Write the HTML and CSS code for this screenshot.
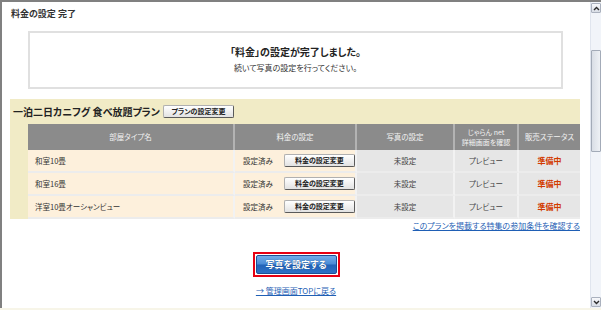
FILE: index.html
```html
<!DOCTYPE html>
<html lang="ja">
<head>
<meta charset="utf-8">
<title>料金の設定 完了</title>
<link rel="stylesheet" href="styles.css">
</head>
<body>
<div class="window">
  <div class="frame">
    <main class="content">
      <h1 class="page-title">料金の設定 完了</h1>
      <div class="notice">
        <p class="notice-main">「料金」の設定が完了しました。</p>
        <p class="notice-sub">続いて写真の設定を行ってください。</p>
      </div>
      <section class="plan">
        <div class="plan-head">
          <h2 class="plan-name">一泊二日カニフグ 食べ放題プラン</h2>
          <button class="btn-gray btn-plan" type="button">プランの設定変更</button>
        </div>
        <div class="rooms">
          <div class="row head">
            <div class="cell">部屋タイプ名</div>
            <div class="cell">料金の設定</div>
            <div class="cell">写真の設定</div>
            <div class="cell two">じゃらん net<br>詳細画面を確認</div>
            <div class="cell">販売ステータス</div>
          </div>
          <div class="row body">
            <div class="cell name">和室10畳</div>
            <div class="cell price"><span>設定済み</span><button class="btn-gray btn-price" type="button">料金の設定変更</button></div>
            <div class="cell gray">未設定</div>
            <div class="cell gray">プレビュー</div>
            <div class="cell gray status">準備中</div>
          </div>
          <div class="row body">
            <div class="cell name">和室16畳</div>
            <div class="cell price"><span>設定済み</span><button class="btn-gray btn-price" type="button">料金の設定変更</button></div>
            <div class="cell gray">未設定</div>
            <div class="cell gray">プレビュー</div>
            <div class="cell gray status">準備中</div>
          </div>
          <div class="row body">
            <div class="cell name">洋室10畳オーシャンビュー</div>
            <div class="cell price"><span>設定済み</span><button class="btn-gray btn-price" type="button">料金の設定変更</button></div>
            <div class="cell gray">未設定</div>
            <div class="cell gray">プレビュー</div>
            <div class="cell gray status">準備中</div>
          </div>
        </div>
      </section>
      <p class="criteria"><a href="#">このプランを掲載する特集の参加条件を確認する</a></p>
      <div class="actions">
        <div class="focus-ring"><button class="btn-blue" type="button">写真を設定する</button></div>
      </div>
      <p class="back"><a href="#">→ 管理画面TOPに戻る</a></p>
    </main>
    <div class="scrollbar">
      <div class="sb-btn">
        <svg width="7" height="5" viewBox="0 0 7 5"><polyline points="1,4 3.5,1.5 6,4" fill="none" stroke="#2b2b2b" stroke-width="1.4"/></svg>
      </div>
      <div class="sb-track top"></div>
      <div class="sb-thumb"></div>
      <div class="sb-track rest"></div>
      <div class="sb-btn">
        <svg width="7" height="5" viewBox="0 0 7 5"><polyline points="1,1 3.5,3.5 6,1" fill="none" stroke="#2b2b2b" stroke-width="1.4"/></svg>
      </div>
    </div>
  </div>
  <div class="bottom-strip"></div>
</div>
</body>
</html>
```

FILE: styles.css
```css
* { box-sizing: border-box; margin: 0; padding: 0; }
html, body { width: 601px; height: 310px; overflow: hidden; background: #fff; }
body {
  font-family: "Noto Sans CJK JP", "Noto Sans", sans-serif;
  color: #333;
  font-feature-settings: "palt";
}
a { color: #1f5fb5; text-decoration: underline; }

.window { display: flex; flex-direction: column; height: 310px; }
.frame {
  display: flex;
  height: 308px;
  border-top: 2px solid #808080;
  border-left: 2px solid #808080;
}
.content {
  flex: 1;
  min-width: 0;
  overflow: hidden;
  display: flex;
  flex-direction: column;
}
.bottom-strip { height: 2px; background: #f7f5e8; }

.page-title {
  font-size: 9px;
  font-weight: bold;
  line-height: 12px;
  margin: 6px 0 0 9px;
  color: #333;
}

.notice {
  margin: 11px 27px 0 26px;
  border: 2px solid #e0e0e0;
  padding: 12px 0 13px;
  text-align: center;
}
.notice-main { font-size: 10px; font-weight: bold; line-height: 14px; color: #222; }
.notice-sub { font-size: 8px; line-height: 12px; color: #333; margin-top: 3px; }

.plan {
  margin: 10px 10px 0 8px;
  background: #f1ebc6;
}
.plan-head {
  height: 25px;
  display: flex;
  align-items: center;
  padding-left: 3px;
  gap: 3px;
}
.plan-name { font-size: 10px; font-weight: bold; line-height: 14px; color: #222; }

.btn-gray {
  font-family: inherit;
  font-feature-settings: "palt";
  font-size: 7px;
  font-weight: bold;
  color: #222;
  height: 13px;
  line-height: 11px;
  border: 1px solid #b0b0b0;
  border-right-color: #5a5a5a;
  border-bottom-color: #5a5a5a;
  border-radius: 2px;
  background: linear-gradient(#ffffff, #e2e2e2);
  padding: 0;
}
.btn-plan { width: 71px; }
.btn-price { width: 71px; }

.rooms { margin-left: 18px; }
.row {
  display: grid;
  grid-template-columns: 207px 122px 98px 64px 61px;
}
.cell {
  display: flex;
  align-items: center;
  justify-content: center;
  font-size: 7.5px;
  line-height: 10px;
  border-right: 2px solid #f2f2f2;
  border-bottom: 2px solid #ececec;
}
.cell:last-child { border-right: 0; }
.head .cell {
  height: 26px;
  background: #8b8b8b;
  color: #f2f2f2;
  border-right-color: #b3b3b3;
  border-bottom: 0;
  text-align: center;
}
.head .cell.two { font-size: 7px; line-height: 10px; }
.body .cell { height: 23px; background: #e6e6e6; color: #444; }
.body .cell.name { background: #fdf0dc; justify-content: flex-start; padding-left: 7px; color: #333; }
.body .cell.price { background: #fdf0dc; justify-content: flex-start; padding-left: 8px; gap: 11px; color: #333; }
.body .cell.status { color: #d23a00; font-weight: bold; font-size: 8px; }

.criteria {
  margin: 1px 10px 0 0;
  text-align: right;
  font-size: 8px;
  line-height: 12px;
}

.actions { margin-top: 20px; display: flex; justify-content: center; }
.focus-ring { border: 2px solid #e60012; padding: 1px; }
.btn-blue {
  display: block;
  width: 81px;
  height: 19px;
  border: 1px solid #1b4f95;
  border-radius: 2px;
  background: linear-gradient(#72ace9 0%, #4a8bd6 48%, #2263b8 52%, #2d70c4 100%);
  color: #fff;
  font-family: inherit;
  font-feature-settings: "palt";
  font-weight: bold;
  font-size: 9px;
  text-shadow: 0 0 1px #1a3d70;
}

.back {
  margin-top: 8px;
  text-align: center;
  font-size: 8px;
  line-height: 12px;
}

.scrollbar {
  width: 11px;
  display: flex;
  flex-direction: column;
  background: #f1f4f9;
  border-left: 1px solid #e0e5ee;
}
.sb-btn {
  height: 10px;
  margin: 1px 0;
  display: flex;
  align-items: center;
  justify-content: center;
  background: linear-gradient(#f7f8fb, #d8dde6);
  border: 1px solid #aab1be;
  border-radius: 1px;
}
.sb-track.top { height: 36px; }
.sb-track.rest { flex: 1; }
.sb-thumb {
  height: 102px;
  background: linear-gradient(90deg, #d9dee6, #eef1f5);
  border: 1px solid #a3abb8;
  border-radius: 1px;
}
```
